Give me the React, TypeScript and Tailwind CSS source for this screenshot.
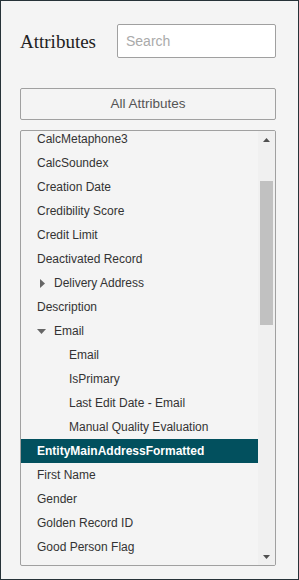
const rows: { label: string; level: number; toggle?: "open" | "closed"; active?: boolean }[] = [
  { label: "CalcMetaphone3", level: 0 },
  { label: "CalcSoundex", level: 0 },
  { label: "Creation Date", level: 0 },
  { label: "Credibility Score", level: 0 },
  { label: "Credit Limit", level: 0 },
  { label: "Deactivated Record", level: 0 },
  { label: "Delivery Address", level: 0, toggle: "closed" },
  { label: "Description", level: 0 },
  { label: "Email", level: 0, toggle: "open" },
  { label: "Email", level: 1 },
  { label: "IsPrimary", level: 1 },
  { label: "Last Edit Date - Email", level: 1 },
  { label: "Manual Quality Evaluation", level: 1 },
  { label: "EntityMainAddressFormatted", level: 0, active: true },
  { label: "First Name", level: 0 },
  { label: "Gender", level: 0 },
  { label: "Golden Record ID", level: 0 },
  { label: "Good Person Flag", level: 0 },
];

const Caret = ({ open }: { open: boolean }) =>
  open ? (
    <svg width="9" height="5" viewBox="0 0 9 5" className="mr-[8px]">
      <path d="M0 0h9L4.5 5z" fill="#666" />
    </svg>
  ) : (
    <svg width="5" height="9" viewBox="0 0 5 9" className="ml-[3px] mr-[9px]">
      <path d="M0 0l5 4.5L0 9z" fill="#666" />
    </svg>
  );

const App = () => {
  return (
    <div
      className="w-[299px] h-[580px] bg-[#f4f4f4] border border-[#263238] pl-[19px] pr-[22px] pt-[23px]"
      style={{ fontFamily: '"Liberation Sans", Arial, sans-serif' }}
    >
      {/* header */}
      <div className="flex items-center justify-between h-[34px]">
        <h2
          className="text-[19px] text-[#222] leading-none"
          style={{ fontFamily: '"Liberation Serif", "Times New Roman", serif' }}
        >
          Attributes
        </h2>
        <input
          placeholder="Search"
          className="w-[159px] h-[34px] bg-white border border-[#a0a0a0] rounded-[2px] px-[8px] text-[14px] text-[#333] placeholder:text-[#aaa] outline-none"
        />
      </div>

      <button className="mt-[30px] w-full h-[32px] border border-[#a0a0a0] rounded-[2px] text-[13.5px] text-[#555] bg-[#f4f4f4]">
        All Attributes
      </button>

      {/* attribute list */}
      <div className="mt-[10px] h-[436px] border border-[#a0a0a0] rounded-[2px] flex overflow-hidden">
        <div className="flex-1 overflow-hidden">
          <ul className="-mt-[4px]">
            {rows.map((r, i) => (
              <li
                key={i}
                className={`h-[24px] flex items-center text-[12px] ${
                  r.active ? "bg-[#02505e] text-white font-bold" : "text-[#333]"
                } ${r.level === 1 ? "pl-[48px]" : "pl-[16px]"}`}
              >
                {r.toggle && <Caret open={r.toggle === "open"} />}
                {r.label}
              </li>
            ))}
          </ul>
        </div>
        {/* scrollbar */}
        <div className="w-[17px] bg-[#f0f0f0] flex flex-col items-center">
          <div className="h-[17px] flex items-center justify-center">
            <svg width="7" height="4" viewBox="0 0 7 4">
              <path d="M0 4L3.5 0L7 4z" fill="#505050" />
            </svg>
          </div>
          <div className="mt-[33px] w-[13px] h-[144px] bg-[#c1c1c1]" />
          <div className="flex-1" />
          <div className="h-[17px] flex items-center justify-center">
            <svg width="7" height="4" viewBox="0 0 7 4">
              <path d="M0 0h7L3.5 4z" fill="#505050" />
            </svg>
          </div>
        </div>
      </div>
    </div>
  );
};

export default App;
